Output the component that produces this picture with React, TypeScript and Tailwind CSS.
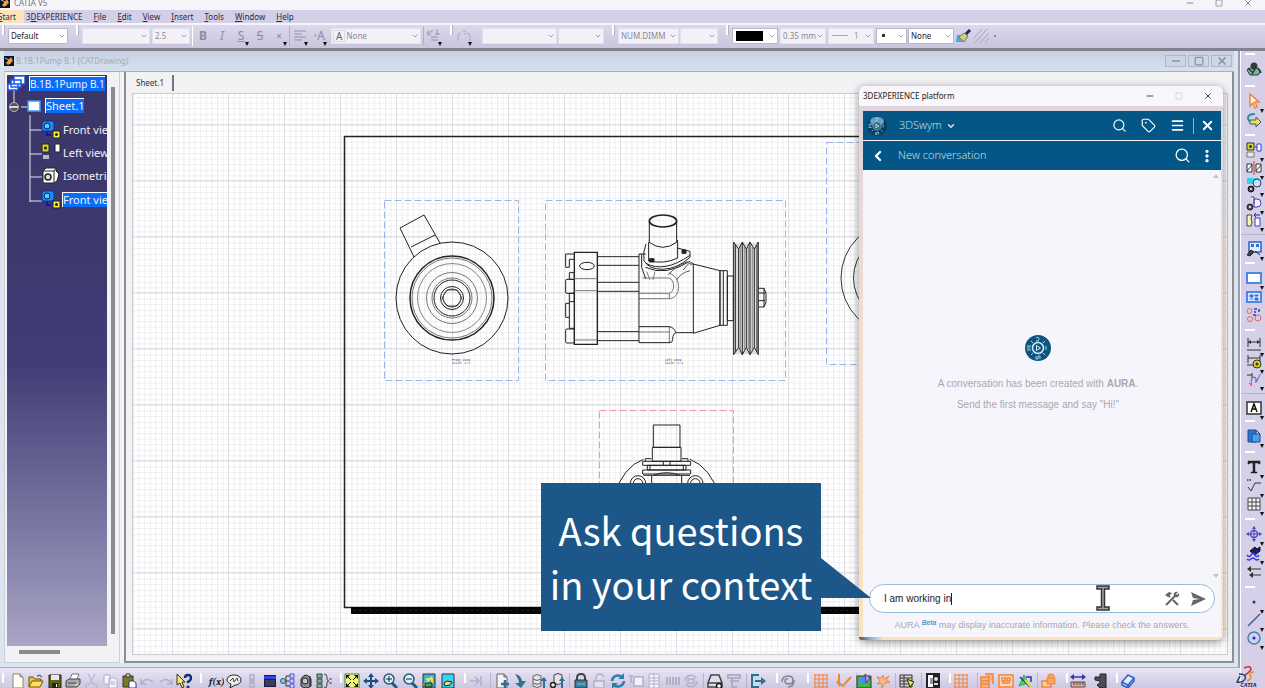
import { ReactNode } from 'react'
import { ChevronDown, ChevronLeft, EllipsisVertical, Menu, Minus, Search, Square, Tag, X } from 'lucide-react'
import clsx from 'clsx'

/* ---------- toolbar icons, all on a 16x16 grid ---------- */

const GHOST = '#b3aec6'
const TEAL = '#2f6f8f'
const ORANGE = '#f0853c'

const icons: Record<string, ReactNode> = {
  new: <path d="M3 1h7l3 3v11H3z M10 1v3h3" fill="#fffef0" stroke="#8a8778" />,
  open: (
    <>
      <path d="M1 14V4h4l2 2h6v2" fill="#e8c33c" stroke="#6b5510" />
      <path d="M1 14l3-6h11l-3 6z" fill="#ffdf5c" stroke="#6b5510" />
      <path d="M9 3q3-2 5 1" fill="none" stroke="#333" />
    </>
  ),
  save: (
    <>
      <path d="M2 2h12v13H2z" fill="#5d6414" stroke="#222" />
      <path d="M4 2h8v5H4z" fill="#e8e8ee" />
      <path d="M5 10h6v5H5z" fill="#222" />
      <path d="M9 11h1v3H9z" fill="#fff" />
    </>
  ),
  print: (
    <>
      <path d="M5 6l2-5h7l-2 5" fill="#fff" stroke="#777" />
      <path d="M1 8l3-2h11v5l-3 3H1z" fill="#a7a9b6" stroke="#444" />
      <path d="M3 10h8" stroke="#444" />
      <path d="M10 12h3" stroke="#e8d820" strokeWidth="2" />
    </>
  ),
  cut: <path d="M4 1l6 11M11 1L5 12M3 15a2 2 0 1 1 2-3M12 15a2 2 0 1 0-2-3" fill="none" stroke={GHOST} />,
  copy: <path d="M2 2h6v9H2z M7 5h6l2 2v8H7z M9 9h4 M9 11h4" fill="#f4f2fa" stroke={GHOST} />,
  paste: (
    <>
      <path d="M2 3h10v11H2z" fill="#7a7a1c" stroke="#333" />
      <path d="M5 1h4v3H5z" fill="#ddd" stroke="#333" />
      <path d="M8 8h5l2 2v5H8z" fill="#fff" stroke="#33a" />
    </>
  ),
  undo: <path d="M2 6v5h5M2 11Q7 3 14 9" fill="none" stroke={GHOST} strokeWidth="1.5" />,
  redo: <path d="M14 6v5H9M14 11Q9 3 2 9" fill="none" stroke={GHOST} strokeWidth="1.5" />,
  help: (
    <>
      <path d="M1 1v11l3-2 2 5 2-1-2-5h3z" fill="#f5e66b" stroke="#333" />
      <path d="M9 5q0-3 3-3t3 3q0 2-3 4v1" fill="none" stroke="#16306e" strokeWidth="2.5" />
      <circle cx="12" cy="14" r="1.5" fill="#16306e" />
    </>
  ),
  fx: <text x="1" y="12" className="font-serif text-[10px] font-bold italic" fill="#1b1b1b">f(x)</text>,
  comment: (
    <>
      <path d="M8 2c4 0 7 2 7 5s-3 5-6 5l-5 3 1-4C3 10 1 9 1 7c0-3 3-5 7-5z" fill="#eee" stroke="#222" />
      <path d="M4 8l3-3 1 4 3-4 1 3" fill="none" stroke="#444" />
    </>
  ),
  chain: <path d="M6 2h4v5H6z M6 9h4v5H6z M8 5v6" fill="none" stroke={GHOST} strokeWidth="1.5" />,
  table: (
    <>
      <path d="M2 2h12v12H2z" fill="#1e1e3c" />
      <path d="M2 3h12v3H2z" fill="#3045e0" />
      <path d="M3 8h10M3 10h10M3 12h10" stroke="#5b5b78" />
    </>
  ),
  graph: (
    <>
      <path d="M3 8h6M6 3v10M6 3h5M6 13h5" fill="none" stroke="#333" />
      <circle cx="3" cy="8" r="2.5" fill="#7ed0d8" stroke="#356" />
      <path d="M10 1h4v4h-4zM10 6h4v4h-4zM10 11h4v4h-4z" fill="#cfd0ff" stroke="#5050d0" />
    </>
  ),
  camera: (
    <>
      <path d="M3 6q5-8 10 0v7q-5 4-10 0z" fill="#8d8d92" stroke="#222" />
      <circle cx="7" cy="8" r="3" fill="#c9c9cd" stroke="#222" />
      <path d="M12 3v11" stroke="#222" />
    </>
  ),
  bricks: (
    <>
      <path d="M1 1h5v4H1zM1 6h5v4H1zM1 11h5v4H1z" fill="#7db38a" stroke="#345" />
      <path d="M8 1q3 0 3 3v2q0 2 2 2-2 0-2 2v2q0 3-3 3M13 6h3M13 10h3" fill="none" stroke="#444" />
    </>
  ),
  fit: (
    <>
      <path d="M1 1h14v14H1z" fill="#f3f37a" stroke="#3a8a4a" />
      <path d="M3 3l4 4M13 3L9 7M3 13l4-4M13 13L9 9" stroke="#111" />
      <path d="M2 2h4L2 6zM14 2h-4l4 4zM2 14h4l-4-4zM14 14h-4l4-4z" fill="#111" />
    </>
  ),
  pan: (
    <>
      <path d="M8 2v12M2 8h12" stroke="#1d4f86" strokeWidth="2" />
      <path d="M8 0l3 4H5zM8 16l3-4H5zM0 8l4-3v6zM16 8l-4-3v6z" fill="#1d4f86" />
    </>
  ),
  zoomIn: (
    <>
      <path d="M10 10l5 5" stroke="#245a80" strokeWidth="3" />
      <circle cx="7" cy="6" r="5" fill="#d9f2fa" stroke="#245a80" strokeWidth="1.5" />
      <path d="M4 6h6M7 3v6" stroke="#222" />
    </>
  ),
  zoomOut: (
    <>
      <path d="M10 10l5 5" stroke="#245a80" strokeWidth="3" />
      <circle cx="7" cy="6" r="5" fill="#d9f2fa" stroke="#245a80" strokeWidth="1.5" />
      <path d="M4 6h6" stroke="#222" />
    </>
  ),
  normal: (
    <>
      <path d="M2 1h12v14H2z" fill="#3bb7d6" stroke="#333" />
      <path d="M3 12l8-8M5 6h6v5" stroke="#e9e24a" strokeWidth="2" fill="none" />
      <path d="M4 10h7v4H4z" fill="#49a05a" stroke="#222" />
    </>
  ),
  views: (
    <>
      <path d="M2 1h12v14H2z" fill="#39d3f2" stroke="#333" />
      <path d="M4 10l3-2 5 1-2 3-5 1z" fill="#eadf72" stroke="#222" />
    </>
  ),
  ghostArrow: <path d="M2 8h9M7 4l4 4-4 4M13 3v10" fill="none" stroke={GHOST} strokeWidth="1.5" />,
  docPlus: (
    <>
      <path d="M3 1h7l3 3v11H3z M10 1v3h3" fill="#f4f4f6" stroke="#666" />
      <path d="M11 7v8M7 11h8" stroke={TEAL} strokeWidth="2.5" />
    </>
  ),
  download: <path d="M3 1q6 1 7 7h4l-5 7-6-5h4q0-4-4-9z" fill={TEAL} />,
  dbUp: (
    <>
      <path d="M2 3q4-3 8 0v10q-4 3-8 0z M2 6q4 3 8 0 M2 10q4 3 8 0" fill="#e3e3e8" stroke="#666" />
      <path d="M12 15V8h-3l4-4 3 4h-2v7z" fill={TEAL} />
    </>
  ),
  dbUpGear: (
    <>
      <path d="M5 2q4-3 8 0v8q-4 3-8 0z" fill="#e3e3e8" stroke="#444" />
      <circle cx="4" cy="12" r="2.5" fill="#eee" stroke="#222" strokeWidth="1.5" />
      <path d="M12 15V8h-2l3-4 3 4h-2v7z" fill={TEAL} />
    </>
  ),
  lock: (
    <>
      <path d="M4 8V5q0-4 4-4t4 4v3" fill="none" stroke="#444" strokeWidth="2" />
      <path d="M2 7h12v8H2z" fill="#3d7fa0" stroke="#333" />
      <path d="M4 11h8" stroke="#8fc0d4" />
    </>
  ),
  unlock: <path d="M5 8V5q0-4 4-4 3 0 3 3M3 8h10v7H3z" fill="#e4e1ee" stroke={GHOST} strokeWidth="1.5" />,
  refresh: (
    <>
      <path d="M2 8a6 6 0 0 1 10-4M14 8a6 6 0 0 1-10 4" fill="none" stroke="#2b7fa6" strokeWidth="2.5" />
      <path d="M14 0v6H8zM2 16v-6h6z" fill="#2b7fa6" />
    </>
  ),
  ghostPanel: <path d="M1 3h4M3 3v6M6 4h9v9H6z M2 9h3" fill="#f4f2fa" stroke={GHOST} strokeWidth="1.5" />,
  ghostSheet: <path d="M3 1h10v14H3z M3 5h10 M3 8h10 M3 11h10 M8 1v14" fill="#f4f2fa" stroke={GHOST} />,
  ghostBars: <path d="M2 4v8M5 4v8M8 4v8M11 4v8M14 4v8" stroke={GHOST} strokeWidth="2" />,
  ghostSync: <path d="M2 8a6 6 0 0 1 11-3M14 8a6 6 0 0 1-11 3M5 6h6v4H5z" fill="none" stroke={GHOST} strokeWidth="1.5" />,
  drive: (
    <>
      <path d="M4 2h8l3 8v4H1v-4z M1 10h14" fill="#dde0e8" stroke="#444" strokeWidth="1.5" />
      <circle cx="12" cy="13" r="2.5" fill="#fff" stroke="#222" strokeWidth="1.5" />
    </>
  ),
  ghostFilter: <path d="M2 2h12v3H2zM4 8h9M6 5v9h5" fill="none" stroke={GHOST} strokeWidth="2" />,
  exit: (
    <>
      <path d="M9 2H2v12h7" fill="#c7dbe8" stroke={TEAL} strokeWidth="2" />
      <path d="M5 8h7" stroke={TEAL} strokeWidth="2" />
      <path d="M11 4l5 4-5 4z" fill={TEAL} />
    </>
  ),
  swirl: <path d="M2 9q0-6 6-6 5 0 5 4t-4 4-4-3 3-2M14 7q0 7-6 7" fill="none" stroke="#85828f" strokeWidth="1.5" />,
  grid: <path d="M2 1v14M6 1v14M10 1v14M14 1v14M1 2h14M1 6h14M1 10h14M1 14h14" stroke={ORANGE} />,
  snap: <path d="M3 1v9l4 3 8-9M1 8l3 5" fill="none" stroke={ORANGE} strokeWidth="2" />,
  picture: (
    <>
      <path d="M1 3h14v12H1z" fill="#43b649" stroke="#333" />
      <path d="M3 5h7v5H3z" fill="#4a8cff" />
      <path d="M9 1l5 4-4 5z" fill="#c28cff" stroke="#444" />
    </>
  ),
  spark: <path d="M8 2l1 4 5-3-3 4 4 2-5 1-3 5-1-5-4 1 3-3-3-4 4 1z" fill="#f7b888" stroke={ORANGE} />,
  pattern: (
    <>
      <path d="M1 2h12v12H1z" fill="#d5d5d5" stroke="#333" />
      <path d="M1 5h12M1 8h12M1 11h12M5 2v12" stroke="#333" />
      <path d="M8 6l7 3-4 5z" fill="#e6e23a" stroke="#222" />
    </>
  ),
  contrast: (
    <>
      <path d="M2 1h12v14H2z" fill="#fff" stroke="#222" strokeWidth="2" />
      <path d="M8 1h6v14H8z" fill="#222" />
      <path d="M5 5h3v6H5z" fill="#999" />
      <circle cx="11" cy="6" r="2" fill="#ddd" />
      <path d="M9 11h4" stroke="#ddd" strokeWidth="2" />
    </>
  ),
  orangeDoc: <path d="M2 4h8v11H2zM6 1h8v10M2 8h8M2 11h8" fill="#fbb27c" stroke={ORANGE} strokeWidth="1.5" />,
  orangeTiles: <path d="M1 2h14v12H1zM4 5h3v3H4zM9 5h3v3H9zM4 10h8" fill="#fdd9bd" stroke={ORANGE} strokeWidth="1.5" />,
  analyse: (
    <>
      <path d="M2 13L7 2l4 8z" fill="#57d066" stroke="#2a5" />
      <path d="M3 4l10 10M9 4h5v5" stroke="#1e3f9a" strokeWidth="1.5" fill="none" />
      <path d="M8 7l6 7" stroke="#e6dd2e" strokeWidth="2" />
    </>
  ),
  orangeLock: (
    <>
      <path d="M1 8h9v6H1z" fill="#fdd0ac" stroke={ORANGE} strokeWidth="1.5" />
      <path d="M7 5V3q0-2 3-2t3 2v2M6 5h8v6H6z" fill="#f9a262" stroke={ORANGE} />
    </>
  ),
  measure: (
    <>
      <path d="M2 4h12" stroke="#3333b0" strokeWidth="1.5" />
      <path d="M0 4l4-3v6zM16 4l-4-3v6z" fill="#3333b0" />
      <path d="M1 9h14v5H1z" fill="#e3a7a2" stroke="#555" />
      <path d="M4 9v3M7 9v3M10 9v3M13 9v3" stroke="#444" />
    </>
  ),
  clamp: <path d="M8 1h6v14H8l-3-3 3-2V8L3 7V4h5z" fill="#4a4f57" stroke="#222" />,
  book: (
    <>
      <path d="M2 9l6-7 6 3-6 7z" fill="#e6efff" stroke="#2d63c8" strokeWidth="1.5" />
      <path d="M2 9v3l6 3 6-7V5M8 12v3" fill="none" stroke="#2d63c8" strokeWidth="1.5" />
    </>
  ),

  // right hand column
  robot: (
    <>
      <path d="M1 9q7-6 14 1l-3 4H4z" fill="#7fb39b" stroke="#333" />
      <circle cx="8" cy="5" r="3.5" fill="#333a3a" />
      <path d="M2 7l4 4M12 7l3 5M6 13l3-5" stroke="#24433a" strokeWidth="1.5" />
    </>
  ),
  arrow: <path d="M4 1v12l3-3 2 5 2-1-2-5h4z" fill="#fff3e6" stroke={ORANGE} strokeWidth="1.5" />,
  turn: (
    <>
      <path d="M9 2Q2 2 2 6t6 4" fill="none" stroke="#2b8faa" strokeWidth="2" />
      <path d="M4 8h6V5l5 5-5 5v-3H4z" fill="#dfe46a" stroke="#555" />
    </>
  ),
  project: (
    <>
      <path d="M1 1h7v7H1z" fill="#d6d63a" stroke="#333" />
      <circle cx="4.5" cy="4.5" r="1.5" fill="#333" />
      <path d="M1 10h7v5H1z" fill="#e9e9ee" stroke="#777" />
      <path d="M9 5h3" stroke="#22c" />
      <path d="M11 2h4v7h-4z" fill="#fff" stroke="#3a3ac8" />
    </>
  ),
  section: (
    <>
      <path d="M1 4h5v8H1zM10 4h5v8h-5z" fill="#fff" stroke="#333" />
      <path d="M1 11l5-6M10 11l5-6" stroke="#333" />
      <path d="M8 1v14" stroke="#c33" />
    </>
  ),
  detail: (
    <>
      <path d="M1 1h12L8 7H1z" fill="#2cd6ee" />
      <circle cx="11" cy="6" r="4" fill="#cfe0f7" stroke="#336" />
      <circle cx="5" cy="12" r="3" fill="#444" stroke="#111" />
      <circle cx="5" cy="12" r="1" fill="#fff" />
    </>
  ),
  clip: (
    <>
      <path d="M5 2h3v7M8 4h3q4 0 4 4t-4 4H8z" fill="#f5f5ff" stroke="#3d3dae" />
      <circle cx="4" cy="12" r="3" fill="#555" stroke="#222" />
      <circle cx="4" cy="12" r="1" fill="#fff" />
    </>
  ),
  broken: (
    <>
      <path d="M1 3h5l-1 4 1 3-1 4H1z" fill="#f7f7a8" stroke="#444" />
      <path d="M9 6h5v8H9z" fill="#fff" stroke="#3a3ac8" />
      <path d="M8 3h6M10 1L8 3l2 2" fill="none" stroke="#22b" />
    </>
  ),
  wizard: (
    <>
      <path d="M3 1h12v10H3z" fill="#e6efff" stroke="#2d63c8" strokeWidth="1.5" />
      <path d="M5 3h3v3H5zM10 3h3v3h-3z" fill="#3770d8" />
      <path d="M1 14l4-5 3 2-4 4zM9 10l5 4" fill="#444" stroke="#222" />
    </>
  ),
  sheet: <path d="M1 3h14v10H1z" fill="#fff" stroke="#4c86e8" strokeWidth="2" />,
  sheetDetail: (
    <>
      <path d="M1 3h14v10H1z" fill="#d9e7ff" stroke="#4c86e8" strokeWidth="2" />
      <path d="M4 6h3v2H4zM9 6h3v1H9zM9 9h3v2H9zM4 10h3" stroke="#3770d8" fill="#3770d8" />
    </>
  ),
  instance: (
    <>
      <circle cx="3.5" cy="4" r="2.5" fill="none" stroke="#e06a6a" />
      <circle cx="4" cy="12" r="2.5" fill="none" stroke="#e06a6a" />
      <circle cx="12" cy="11" r="3" fill="none" stroke="#e06a6a" />
      <path d="M8 2h3M8 5h2M13 2v3M7 8h3" stroke="#3939c8" strokeWidth="1.5" />
    </>
  ),
  dimension: (
    <>
      <path d="M2 1v9M14 1v9M2 5h12M1 13h14" stroke="#333" />
      <path d="M2 5l3-2v4zM14 5l-3-2v4z" fill="#333" />
    </>
  ),
  dimensionGear: (
    <>
      <path d="M2 1v8M14 1v6M2 4h12M1 11h8" stroke="#333" />
      <circle cx="11" cy="10" r="4" fill="#dcd02a" stroke="#333" />
      <circle cx="11" cy="10" r="1.5" fill="#333" />
    </>
  ),
  curve: (
    <>
      <path d="M1 4h5M6 2v5" stroke="#333" />
      <path d="M5 14q0-8 3-8t2 4 2-2 2-4" fill="none" stroke="#5a4fd0" />
      <path d="M3 12l3 3" stroke="#d44" />
    </>
  ),
  datum: (
    <>
      <path d="M1 2h14v12H1z" fill="#fff" stroke="#333" strokeWidth="1.5" />
      <path d="M5 12l3-8 3 8M6 9h4" fill="none" stroke="#111" strokeWidth="1.5" />
    </>
  ),
  props: (
    <>
      <path d="M2 2h8v12H2z" fill="#2b74d0" stroke="#1b4a90" />
      <path d="M6 6h8v8H6z" fill="#4aa0ea" stroke="#1b4a90" />
      <path d="M10 2l4 4" stroke="#333" />
    </>
  ),
  text: <path d="M2 2h12v3h-1l-1-1H9v9h2v1H5v-1h2V4H4L3 5H2z" fill="#222" stroke="#222" strokeWidth=".5" />,
  rough: (
    <>
      <path d="M2 9l3 4L9 5h6" fill="none" stroke="#333" />
      <path d="M1 2h5" stroke="#333" strokeWidth="1.5" strokeDasharray="1.5 1" />
    </>
  ),
  tableGrid: <path d="M2 2h12v12H2zM2 6h12M2 10h12M6 2v12M10 2v12" fill="#f5f5fa" stroke="#444" />,
  axis: (
    <>
      <circle cx="8" cy="8" r="3.5" fill="none" stroke="#4a4ad0" strokeWidth="1.5" />
      <path d="M8 1v14M1 8h14" stroke="#4a4ab0" />
      <path d="M8 0l2 3H6zM8 16l2-3H6zM0 8l3-2v4zM16 8l-3-2v4z" fill="#4a4ab0" />
    </>
  ),
  fill: (
    <>
      <path d="M4 6l5-4 2 2 3-2v4l-5 4z" fill="#1c1c74" stroke="#111" />
      <path d="M1 10q2 3 4 0t4 0 4 0M1 14q2 2 4 0t4 0 4 0" fill="none" stroke="#3c3ce0" strokeWidth="1.5" />
    </>
  ),
  arrows: (
    <>
      <path d="M4 5h11M4 11h11" stroke="#333" />
      <path d="M1 5l4-3v6zM3 11l4-3v6z" fill="#333" />
    </>
  ),
  point: <circle cx="8" cy="8" r="1.5" fill="#1b2f8e" />,
  line: <path d="M2 14L14 2" stroke="#37608c" strokeWidth="1.5" />,
  circle: (
    <>
      <circle cx="8" cy="8" r="6" fill="none" stroke="#3f82b4" strokeWidth="1.5" />
      <circle cx="8" cy="8" r="1.5" fill="#2222c8" />
    </>
  ),
}

// a trailing "+" marks the icons that open a flyout
function ToolButton({ name }: { name: string }) {
  const flyout = name.endsWith('+')
  const key = name.replace('+', '')
  return (
    <button type="button" aria-label={key} className="relative size-4 shrink-0">
      <svg viewBox="0 0 16 16" className="size-4">{icons[key]}</svg>
      {flyout && (
        <svg viewBox="0 0 4 4" className="absolute -right-0.5 -bottom-1 size-1">
          <path d="M0 0h4L2 4z" fill="#111" />
        </svg>
      )}
    </button>
  )
}

const bottomSections = [
  { box: 'w-[198px] pl-2 pr-2', bar: true, items: ['new', 'open', 'save', 'print', 'cut', 'copy', 'paste', 'undo', 'redo', 'help'] },
  { box: 'w-[140px] pl-2 pr-2', bar: true, items: ['fx', 'comment', 'chain', 'table', 'graph', 'camera', 'bricks'] },
  { box: 'w-[124px] pl-1 pr-2', bar: true, items: ['fit', 'pan', 'zoomIn', 'zoomOut', 'normal', 'views'] },
  { box: 'w-[26px] pl-1', bar: true, items: ['ghostArrow'] },
  { box: 'w-[79px] px-1', items: ['docPlus', 'download', 'dbUp', 'dbUpGear'] },
  { box: 'w-[134px] px-1', items: ['lock', 'unlock', 'refresh', 'ghostPanel', 'ghostSheet', 'ghostBars', 'ghostSync'] },
  { box: 'w-[43px] px-1', items: ['drive', 'ghostFilter'] },
  { box: 'w-[30px] pl-1', items: ['exit'] },
  { box: 'w-[31px] pl-1', bar: true, items: ['swirl'] },
  { box: 'w-[49px] pl-1.5 pr-1', bar: true, items: ['grid', 'snap'] },
  { box: 'w-[39px] pr-1', items: ['picture', 'spark'] },
  { box: 'w-[26px] pl-1', items: ['pattern'] },
  { box: 'w-[28px] pl-1', items: ['contrast'] },
  { box: 'w-[28px] pl-1', bar: true, items: ['grid'] },
  { box: 'w-[60px] pl-0.5 pr-1', items: ['orangeDoc', 'orangeTiles', 'analyse'] },
  { box: 'w-[29px] pl-1', items: ['orangeLock'] },
  { box: 'w-[50px] pl-1 pr-2', bar: true, items: ['measure', 'clamp'] },
  { box: 'w-[40px] pl-1', bar: true, items: ['book'] },
]

const sideSections = [
  { box: 'h-[32px]', bar: true, items: ['robot'] },
  { box: 'h-[49px]', bar: true, items: ['arrow+', 'turn'] },
  { box: 'h-[100px]', bar: true, items: ['project+', 'section+', 'detail+', 'clip+', 'broken+'] },
  { box: 'h-[28px]', items: ['wizard+'] },
  { box: 'h-[67px]', bar: true, items: ['sheet+', 'sheetDetail', 'instance'] },
  { box: 'h-[64px]', bar: true, items: ['dimension+', 'dimensionGear+', 'curve+'] },
  { box: 'h-[27px]', items: ['datum+'] },
  { box: 'h-[31px]', bar: true, items: ['props+'] },
  { box: 'h-[67px]', bar: true, items: ['text+', 'rough+', 'tableGrid+'] },
  { box: 'h-[68px]', bar: true, items: ['axis+', 'fill+', 'arrows'] },
  { box: 'h-[66px]', bar: true, items: ['point+', 'line+', 'circle+'] },
]

function BottomToolbar() {
  return (
    <div className="flex h-[21px] shrink-0 overflow-hidden border-t border-[#a9adbb] bg-linear-to-b from-[#e9e4f4] to-[#cdc8e2] pl-0.5">
      {bottomSections.map((s, i) => (
        <div key={i} className="flex shrink-0 pt-[5px]">
          <span className={clsx('shrink-0', s.bar ? '-mr-0.5 h-2.5 w-0.5 bg-white' : '-mr-px h-4 w-px bg-[#b9b4cc]')} />
          <div className={clsx('flex items-start justify-between', s.box)}>
            {s.items.map((n) => <ToolButton key={n} name={n} />)}
          </div>
        </div>
      ))}
    </div>
  )
}

function SideToolbar() {
  return (
    <aside className="relative w-[25px] shrink-0 border-l border-white bg-[#d5d0e8] pt-0.5">
      {sideSections.map((s, i) => (
        <div key={i} className={clsx('flex flex-col', s.box)}>
          <span className={clsx('shrink-0', s.bar ? 'ml-1 h-0.5 w-2.5 bg-white' : 'h-px w-full bg-[#b9b4cc]')} />
          <div className="flex flex-1 flex-col items-center justify-between py-1.5 pl-0.5">
            {s.items.map((n) => <ToolButton key={n} name={n} />)}
          </div>
        </div>
      ))}
      <svg viewBox="0 0 28 22" className="absolute right-0.5 bottom-0 h-[22px] w-7">
        <path d="M9 2q7-3 7 1-1 3-6 6" fill="none" stroke="#d6292f" strokeWidth="1.5" />
        <path d="M4 8q8 0 6 5-2 4-8 3l3-6" fill="none" stroke="#26407e" strokeWidth="1.5" />
        <path d="M19 6q-5 0-4 3 3 3-3 6" fill="none" stroke="#e39a4c" strokeWidth="2" />
        <text x="5" y="21" className="font-['Noto_Sans'] text-[6px] font-bold italic" fill="#1c2c66">CATIA</text>
      </svg>
    </aside>
  )
}

/* ---------- top bars ---------- */

function CatiaMark() {
  return (
    <svg viewBox="0 0 10 10" className="size-2.5 shrink-0">
      <path d="M0 0h10v10H0z" fill="#10141f" />
      <path d="M2 7L7 1l2 4-5 4z" fill="#f39a3a" />
      <path d="M1 2l4 2 1 4" stroke="#8fd2f2" fill="none" />
    </svg>
  )
}

const menus = ['3|D|EXPERIENCE', '|F|ile', '|E|dit', '|V|iew', '|I|nsert', '|T|ools', '|W|indow', '|H|elp']

function MenuBar() {
  return (
    <nav className="flex h-[15px] shrink-0 items-center border-b-2 border-[#f6f4fb] bg-[#d3cfe7] text-[#2e2c3a]">
      <button type="button" className="mr-0.5 h-full w-6 bg-[#fde2bb] pr-1.5">
        <span className="-ml-1"><u className="underline-offset-1">S</u>tart</span>
      </button>
      <div className="flex gap-[11px]">
        {menus.map((m) => {
          const [a, key, b] = m.split('|')
          return (
            <button type="button" key={m}>
              {a}<u className="underline-offset-1">{key}</u>{b}
            </button>
          )
        })}
      </div>
    </nav>
  )
}

interface ComboProps {
  label: string
  value?: string
  className: string
  enabled?: boolean
  children?: ReactNode
}

function Combo({ label, value = '', className, enabled, children }: ComboProps) {
  return (
    <div className={clsx('relative h-4 shrink-0', className)}>
      <select
        aria-label={label}
        defaultValue={value}
        className={clsx(
          'size-full appearance-none border pr-1 pl-0.5 text-[8px] leading-none',
          enabled ? 'border-[#bbb7c9] bg-white text-[#222]' : 'border-[#e4e1ee] bg-[#f3f0f7] text-[#8b8898]',
        )}
      >
        <option value={value}>{value}</option>
      </select>
      <span className="pointer-events-none absolute inset-y-0 left-0 flex items-center">{children}</span>
      <ChevronDown className="pointer-events-none absolute top-1 right-0.5 size-2 text-[#77748a]" />
    </div>
  )
}

function Grip() {
  return <span className="h-2.5 w-0.5 shrink-0 self-start bg-white shadow-[1px_0_0_#b5b0c8]" />
}

function FormatButton({ label, flyout, children }: { label: string; flyout?: boolean; children: ReactNode }) {
  return (
    <button type="button" aria-label={label} className="relative flex size-4 items-center justify-center text-[12px] leading-none text-[#8e8aa0]">
      {children}
      {flyout && <svg viewBox="0 0 4 4" className="absolute right-0 -bottom-0.5 size-1"><path d="M0 0h4L2 4z" fill="#111" /></svg>}
    </button>
  )
}

function FormatToolbar() {
  return (
    <div className="flex h-[26px] shrink-0 items-center border-b-[3px] border-[#84818f] bg-linear-to-b from-[#dcd8ec] to-[#c9c5dc] pb-0.5 pl-0.5">
      <Grip />
      <Combo label="Style" value="Default" className="ml-1 w-[60px]" enabled />
      <span className="w-2" />
      <Grip />
      <Combo label="Font" className="ml-1 w-[68px]" />
      <Combo label="Size" value="2.5" className="ml-0.5 w-[38px]" />
      <span className="mx-0.5 h-5 w-px bg-white" />
      <div className="flex gap-[3px]">
        <FormatButton label="Bold"><b>B</b></FormatButton>
        <FormatButton label="Italic"><i>I</i></FormatButton>
        <FormatButton label="Underline" flyout><span className="underline">S</span></FormatButton>
        <FormatButton label="Strike"><s>S</s></FormatButton>
        <FormatButton label="Superscript" flyout><span className="text-[10px]">×</span></FormatButton>
      </div>
      <span className="mx-0.5 h-5 w-px bg-[#b5b0c8]" />
      <div className="flex gap-[3px]">
        <FormatButton label="Align" flyout>
          <svg viewBox="0 0 16 16" className="size-4"><path d="M2 3h12M2 6h8M2 9h12M2 12h8" stroke="#9490a6" /></svg>
        </FormatButton>
        <FormatButton label="Anchor" flyout><span className="text-[7px]">+</span>A</FormatButton>
      </div>
      <Combo label="Frame" value="&nbsp;&nbsp;&nbsp;&nbsp;&nbsp;&nbsp;None" className="ml-1 w-[90px]">
        <span className="ml-0.5 border border-[#ddd9e6] px-0.5 text-[10px] leading-none text-[#666]">A</span>
      </Combo>
      <span className="mx-0.5 h-5 w-px bg-[#b5b0c8]" />
      <FormatButton label="Symbol" flyout>
        <svg viewBox="0 0 16 16" className="size-4"><path d="M2 6l5-4M3 3a2 2 0 1 0 2 3M11 1v5M9 6h5M5 9h7M5 12h7" fill="none" stroke="#9490a6" /></svg>
      </FormatButton>
      <span className="w-2" />
      <Grip />
      <span className="w-1" />
      <FormatButton label="Tolerance" flyout>
        <svg viewBox="0 0 16 16" className="size-4"><path d="M2 13V8q0-3 3-3M14 13V8q0-3-3-3M7 3h3M8 6h2" fill="none" stroke="#aaa6bb" /></svg>
      </FormatButton>
      <Combo label="Tolerance format" className="ml-2.5 w-[75px]" />
      <Combo label="Tolerance value" className="ml-px w-[46px]" />
      <span className="w-2" />
      <Grip />
      <Combo label="Numerical display" value="NUM.DIMM" className="ml-1 w-[61px]" />
      <Combo label="Precision" className="ml-px w-[38px]" />
      <span className="w-2" />
      <Grip />
      <Combo label="Colour" className="ml-1 w-[46px]" enabled>
        <span className="ml-1 h-2.5 w-[27px] bg-black" />
      </Combo>
      <Combo label="Thickness" value="0.35 mm" className="ml-0.5 w-[46px]" />
      <Combo label="Line type" className="ml-0.5 w-[46px]">
        <span className="ml-1 h-px w-4 bg-[#aaa]" />
        <span className="ml-1.5 text-[#999]">1</span>
      </Combo>
      <Combo label="Point type" className="ml-0.5 w-[31px]" enabled>
        <span className="ml-1.5 size-[3px] bg-[#333]" />
      </Combo>
      <Combo label="Layer" value="None" className="ml-px w-[46px]" enabled />
      <svg viewBox="0 0 16 14" className="ml-0.5 h-3.5 w-4 shrink-0">
        <path d="M1 6h9l-2 7H0z" fill="#4ba4e8" />
        <path d="M3 8l5-4 4 3-4 6z" fill="#d6cf6a" stroke="#777" />
        <path d="M10 5l4-4" stroke="#23235e" strokeWidth="3" />
      </svg>
      <svg viewBox="0 0 16 14" className="ml-0.5 h-3.5 w-4 shrink-0">
        <path d="M0 9l8-9M1 14L13 0M6 14l9-10M11 14l4-5" stroke="#aaa6b6" />
      </svg>
      <span className="ml-1 size-0.5 bg-[#8e8aa0]" />
    </div>
  )
}

/* ---------- specification tree ---------- */

const treeViews = [
  { label: 'Front view', icon: 'front' },
  { label: 'Left view', icon: 'left' },
  { label: 'Isometric', icon: 'iso' },
  { label: 'Front view', icon: 'front', selected: true },
]

function TreeIcon({ kind }: { kind: string }) {
  return (
    <svg viewBox="0 0 20 20" className="size-5 shrink-0">
      {kind === 'front' && (
        <>
          <path d="M1 4l2-2h10v8l-2 2H1z" fill="#1b8df2" stroke="#0b2f8e" />
          <circle cx="6" cy="7" r="3" fill="#5cc8ff" stroke="#06204f" />
          <path d="M6 13v3h4" fill="none" stroke="#1414b4" strokeWidth="2" />
          <path d="M12 12h7v7h-7z" fill="#f4ee3c" stroke="#222" />
          <circle cx="15.5" cy="15.5" r="1.5" fill="#222" />
        </>
      )}
      {kind === 'left' && (
        <>
          <path d="M1 2h7v8H1z" fill="#d8d224" stroke="#222" />
          <circle cx="4.5" cy="6" r="1.5" fill="#222" />
          <path d="M2 13h6v4H2z" fill="#b9b9c4" />
          <path d="M10 5h3" stroke="#22d" strokeWidth="2" />
          <path d="M14 2h5v8h-5z" fill="#fff" stroke="#222" />
        </>
      )}
      {kind === 'iso' && (
        <>
          <path d="M2 5l3-3h10v3l3 3-2 7-3 2H2z" fill="#fff" stroke="#222" />
          <path d="M2 5h11v12M13 5l2-3" fill="none" stroke="#222" />
          <circle cx="7" cy="11" r="3" fill="#ddd" stroke="#222" strokeWidth="1.5" />
        </>
      )}
    </svg>
  )
}

function SpecTree() {
  const selected = 'border-t border-l border-white bg-[#0a6cfa]'
  return (
    <section className="flex w-[116px] shrink-0 flex-col border border-t-0 border-[#cfcdd6] pt-[3px] pl-0.5">
      <div className="flex flex-1">
        <div className="relative w-[100px] overflow-hidden bg-linear-to-b from-[#3a3669] via-[#403c74] to-[#a9a5c6] text-[11px] leading-[14px] whitespace-nowrap text-[#f1f1fa]">
          <svg className="absolute inset-0 size-full">
            <path d="M7 14v18M14 32h6M23 40v87M23 55h12M23 79h12M23 102h12M23 126h12" fill="none" stroke="#e6e6f2" />
            <circle cx="7" cy="32" r="4.5" fill="#555" stroke="#bbb" />
            <path d="M3 32h8" stroke="#fff" strokeWidth="1.5" />
          </svg>
          <div className="relative flex h-4 items-center">
            <svg viewBox="0 0 18 16" className="mr-1 h-4 w-[18px] shrink-0">
              <path d="M7 1h11v8H7z M4 5h10v7H4z M1 9h10v6H1z" fill="#fff" stroke="#1f5bf0" strokeWidth="1.5" />
            </svg>
            <span className={clsx('text-[10px]', selected)}>B.1B.1Pump B.1</span>
          </div>
          <ul className="relative mt-[3px] grid h-[117px] grid-rows-5">
            <li className="flex items-center pl-5">
              <svg viewBox="0 0 14 12" className="h-3 w-3.5"><path d="M1 1h12v10H1z" fill="#fff" stroke="#3b9bff" strokeWidth="1.5" /></svg>
              <span className={clsx('ml-1', selected)}>Sheet.1</span>
            </li>
            {treeViews.map((v, i) => (
              <li key={i} className="flex items-center pl-[34px]">
                <TreeIcon kind={v.icon} />
                <span className={clsx('ml-px', v.selected ? selected : 'border-t border-l border-transparent')}>{v.label}</span>
              </li>
            ))}
          </ul>
        </div>
        <div className="mt-3 mb-3 ml-1 w-1 bg-[#8b8a8f]" />
      </div>
      <div className="mt-1 mb-2 ml-3 h-1 w-[41px] bg-[#8b8a8f]" />
    </section>
  )
}

/* ---------- drawing sheet ---------- */

function FrontView() {
  return (
    <g fill="none" stroke="#222">
      <path d="M414 257L400 228l24-13 16 28M411 247l24-12" />
      <circle cx="452" cy="298" r="56" />
      <circle cx="452" cy="298" r="42" strokeWidth="1.5" />
      <circle cx="452" cy="298" r="40" stroke="#777" />
      <circle cx="452" cy="298" r="34.5" stroke="#888" />
      <circle cx="452" cy="298" r="25.5" stroke="#777" />
      <circle cx="452" cy="298" r="20" stroke="#777" />
      <circle cx="452" cy="298" r="18" />
      <circle cx="452" cy="298" r="11.5" />
      <circle cx="452" cy="298" r="9" />
      <path d="M447 290h10l5 8-5 8h-10l-5-8z" stroke="#555" />
    </g>
  )
}

// drawn at three times the sheet scale
function LeftView() {
  return (
    <g transform="translate(540 180) scale(.3333)" fill="none" stroke="#222" strokeWidth="3">
      <path d="M103 222H77v40h11v-24h15M88 278h15v20H88zM88 340h15v25H88zM88 370H77v42h11M88 365v80h15" />
      <rect x="77" y="298" width="26" height="42" rx="4" />
      <rect x="77" y="447" width="26" height="42" rx="4" />
      <path d="M103 217h69v276h-69z" strokeWidth="4" />
      <ellipse cx="141" cy="258" rx="22" ry="11" />
      <path d="M103 296h69M103 332h69M103 480h69M297 356h95q24-6 24-36t-30-42M297 340h90q14-4 14-22t-14-24h-80M297 456h92M388 340v16M388 440v48M320 275l10 25M345 275l-6 25" stroke="#777" />
      <path d="M172 230h125M172 256h125M172 307h125M172 334h125M172 455h125M172 482h125" />
      <path d="M297 222v266h93q8 0 8-10 0-20 14-20h48M297 440h90q16 2 20 18M297 222h20M305 222v40l12 34" />
      <path d="M318 192q-10 26-6 50 14 26 56 26 46-2 82-36v-18l-38-10M318 250q54 30 132-24M316 262q60 28 134-18" />
      <path d="M328 123v64q40 30 82 0v-64M326 186v56M413 180v54q-40 20-88 8" />
      <ellipse cx="369" cy="123" rx="41" ry="18" strokeWidth="5" />
      <path d="M328 236h14v10h-14zM426 210h12v10h-12z" fill="#222" />
      <path d="M385 285q20-26 58-40M410 300q10-20 40-28M430 270q20-30 30-20" stroke="#555" />
      <path d="M460 252v208M450 252h10l80 20v164l-80 24M540 272h22v164h-22zM550 272v164M562 288h18v134h-18z" />
      <path d="M582 190h74v332h-74z" fill="#ddd" stroke="none" />
      <path d="M581 186l15 22 11-22 12 22 11-22 13 22 12-22v338l-12-22-13 22-11-22-12 22-11-22-15 22z" />
      <path d="M586 195v320M596 208v294M607 186v338M619 208v294M630 186v338M643 208v294M651 195v320" />
      <path d="M601 200v308M613 200v308M625 200v308M637 200v308" stroke="#888" />
      <path d="M657 325h15l6 14v28l-6 14h-15M657 339h18M657 362h18M672 325v56" />
    </g>
  )
}

function TopView() {
  return (
    <g transform="translate(540 400) scale(.3333)" fill="none" stroke="#222" strokeWidth="3">
      <path d="M340 75h80v67h-80zM337 142h86v42h-86zM308 184h144v12H308zM322 196h116v14H322zM308 210h144v12H308zM330 196v14M430 196v14" />
      <path d="M316 184v-8h18M444 184v-8h-18M370 184v12M390 184v12M310 226h140M335 226v40M425 226v40M340 226q40-16 80 0" />
      <path d="M220 290q30-90 90-112M540 290q-30-90-90-112" />
      <circle cx="294" cy="250" r="23" />
      <circle cx="294" cy="250" r="14" />
      <circle cx="466" cy="250" r="23" />
      <circle cx="466" cy="250" r="14" />
    </g>
  )
}

function DrawingSheet() {
  return (
    <svg className="size-full bg-white" role="img" aria-label="Pump drawing">
      <defs>
        <pattern id="minor" x="0" y="3" width="5.6" height="5.6" patternUnits="userSpaceOnUse">
          <path d="M.5 0v5.6M0 .5h5.6" stroke="#e6e6ec" strokeDasharray="2 1" />
        </pattern>
        <pattern id="major" x="39" y="30" width="56" height="56" patternUnits="userSpaceOnUse">
          <path d="M.5 0v56M0 .5h56" stroke="#dedee4" />
        </pattern>
      </defs>
      <rect width="100%" height="100%" fill="url(#minor)" />
      <rect width="100%" height="100%" fill="url(#major)" />
      <g transform="translate(-133 -94)">
        <path d="M344.500 607.500V136.500H1180V607.500z" fill="none" stroke="#222" strokeWidth="1.5" />
        <path d="M351 607h830v7H351z" fill="#050505" />
        <path d="M354 610.500h826" stroke="#333" strokeDasharray="1 4.6" />
        <g fill="none" stroke="#9db4e6" strokeDasharray="7 3">
          <path d="M384.500 200.500h134v180h-134zM545.500 200.500h240v180h-240zM826.500 142.500h134v222h-134z" />
          <path d="M599.500 410.500h134v180h-134z" stroke="#ec9aa4" />
        </g>
        <FrontView />
        <LeftView />
        <TopView />
        <circle cx="897.5" cy="278" r="56.5" fill="none" stroke="#333" />
        <circle cx="897.5" cy="278" r="44" fill="none" stroke="#333" />
        <g className="font-mono text-[3px]" fill="#333">
          <text x="452" y="361">Front view</text>
          <text x="452" y="364">Scale: 1:1</text>
          <text x="665" y="361">Left view</text>
          <text x="665" y="364">Scale: 1:1</text>
        </g>
      </g>
    </svg>
  )
}

/* ---------- 3DEXPERIENCE chat window ---------- */

function Compass({ className, shiny }: { className: string; shiny?: boolean }) {
  return (
    <svg viewBox="0 0 26 26" className={className}>
      <circle cx="13" cy="13" r="13" fill={shiny ? '#0c3c5c' : '#0d5480'} />
      {shiny && <ellipse cx="13" cy="7" rx="9" ry="6" fill="#5f9dbf" />}
      <circle cx="13" cy="13" r="5.5" fill={shiny ? '#2a6b90' : 'none'} stroke="#d9ecf6" strokeWidth={shiny ? 0.5 : 1.5} />
      <path d="M11.500 10.500v5l4-2.500z" fill="none" stroke="#d9ecf6" />
      <path d="M11 3q3-2 3 1t-3 2M2 11h4M2 13h3M2 15h4M11 21v3h2v-3h2v3M21 11v4M6 6l2 2M20 6l-2 2M6 20l2-2M20 20l-2-2" fill="none" stroke="#a8d1e6" />
    </svg>
  )
}

function ChatWindow() {
  return (
    <section className="absolute top-[86px] right-[42px] bottom-12 flex w-[364px] flex-col rounded-md bg-linear-to-b from-[#dcd4e2] via-[#f6dccb] to-[#fbe3bd] shadow-[0_2px_8px_rgba(0,0,0,0.45)]">
      <header className="flex h-5 shrink-0 items-center rounded-t-md bg-[#f8f6fa] px-1 text-[8px] text-[#222]">
        <span className="flex-1">3DEXPERIENCE platform</span>
        <div className="flex gap-5 pr-1.5">
          <button type="button" aria-label="Minimise"><Minus className="size-2.5" /></button>
          <button type="button" aria-label="Maximise"><Square className="size-2 text-[#cfccd4]" /></button>
          <button type="button" aria-label="Close"><X className="size-2.5" /></button>
        </div>
      </header>
      <div className="mt-[5px] mr-0.5 mb-[3px] ml-1 flex flex-1 flex-col bg-[#f6f5fb]">
        <div className="flex h-[29px] items-center bg-[#045686] px-1 text-[#d3e6f1]">
          <Compass className="size-5" shiny />
          <button type="button" className="ml-3 flex flex-1 items-center gap-1 font-['Open_Sans'] text-[11px] font-light">
            3DSwym <ChevronDown className="size-2.5" strokeWidth={3.5} />
          </button>
          <div className="flex items-center gap-3.5 text-white">
            <button type="button" aria-label="Search"><Search className="size-[15px]" strokeWidth={1.8} /></button>
            <button type="button" aria-label="Tags"><Tag className="size-[15px]" strokeWidth={1.8} /></button>
            <button type="button" aria-label="Menu"><Menu className="size-[15px]" strokeWidth={2.5} /></button>
          </div>
          <span className="mr-1.5 ml-2 h-4 w-px bg-[#8db6cd]" />
          <button type="button" aria-label="Close panel" className="pr-0.5 text-white"><X className="size-[15px]" strokeWidth={3} /></button>
        </div>
        <div className="mt-px flex h-[29px] items-center bg-[#045686] pr-1.5 pl-[7px] text-white">
          <button type="button" aria-label="Back"><ChevronLeft className="size-4" strokeWidth={3.5} /></button>
          <h2 className="ml-3 flex-1 font-['Open_Sans'] text-[11px] font-light text-[#d3e6f1]">New conversation</h2>
          <button type="button" aria-label="Search messages"><Search className="size-[17px]" strokeWidth={1.8} /></button>
          <button type="button" aria-label="More" className="ml-2"><EllipsisVertical className="size-4" strokeWidth={3} /></button>
        </div>
        <div className="flex flex-1">
          <div className="flex flex-1 flex-col items-center pt-[165px] pl-0.5 font-['Liberation_Sans'] text-[10px] leading-[21px] text-[#a9a8b0]">
            <Compass className="size-[26px]" />
            <p className="mt-3">A conversation has been created with <b>AURA</b>.</p>
            <p>Send the first message and say "Hi!"</p>
          </div>
          <div className="flex w-2.5 flex-col items-center justify-between py-1">
            <svg viewBox="0 0 6 4" className="h-1 w-1.5"><path d="M0 4h6L3 0z" fill="#c3c1c9" /></svg>
            <svg viewBox="0 0 6 4" className="h-1 w-1.5"><path d="M0 0h6L3 4z" fill="#c3c1c9" /></svg>
          </div>
        </div>
        <form className="relative mx-1.5 mt-0.5 flex h-[29px] items-center rounded-full border border-[#92bdd8] bg-white pr-2 pl-3.5 font-['Liberation_Sans']">
          <input aria-label="Message" defaultValue="I am working in" className="field-sizing-content text-[10px] text-[#222] outline-none" />
          <span className="h-3 w-px bg-[#222]" />
          <span className="flex-1" />
          <button type="button" aria-label="Tools">
            <svg viewBox="0 0 16 16" className="size-4">
              <path d="M2 14L11 5M9 9l5 5M6 6L3 3" stroke="#666" strokeWidth="2" />
              <path d="M1 4l4-3 3 1-4 4zM10 5a3 3 0 0 1 4-4l-2 2 1 1 2-2a3 3 0 0 1-4 4z" fill="#666" />
            </svg>
          </button>
          <button type="button" aria-label="Send" className="ml-2.5">
            <svg viewBox="0 0 16 16" className="size-4"><path d="M1 1l15 7-15 7 2-6 7-1-7-1z" fill="#666" /></svg>
          </button>
          <svg viewBox="0 0 14 26" className="absolute top-0 right-[104px] h-[26px] w-3.5">
            <path d="M1 1h12v3H8.500v18H13v3H1v-3h4.500V4H1z" fill="#a4a4a8" stroke="#333" strokeWidth="1.5" />
          </svg>
        </form>
        <p className="mt-1 mb-1 text-center font-['Liberation_Sans'] text-[9px] leading-4 text-[#a9a8b0]">
          AURA <sup className="font-bold text-[#4b9fd0] italic">Beta</sup> may display inaccurate information. Please check the answers.
        </p>
      </div>
      <span className="absolute bottom-0 left-0 h-[3px] w-6 rounded-bl-md bg-linear-to-r from-[#555] via-[#7fb8d8] to-[#fbe3bd]" />
    </section>
  )
}

function Callout() {
  return (
    <div className="absolute top-[483px] left-[541px] w-[280px] bg-[#1d5789] py-5 text-center font-['Noto_Sans_CJK_SC',sans-serif] text-[38px] leading-[54px] whitespace-nowrap text-white">
      Ask questions<br />in your context
      <svg viewBox="0 0 50 40" className="absolute top-[75px] left-full h-10 w-[50px]">
        <path d="M0 0l50 40H0z" fill="#1d5789" />
      </svg>
    </div>
  )
}

const mdiButtons: [string, ReactNode][] = [
  ['Minimise document', <Minus key="m" className="size-3" strokeWidth={3} />],
  ['Restore document', <Square key="s" className="size-2.5" strokeWidth={3} />],
  ['Close document', <X key="x" className="size-3" strokeWidth={3.5} />],
]

export default function App() {
  return (
    <div className="relative flex h-screen w-full flex-col overflow-hidden bg-[#d5d0e8] font-['Noto_Sans',sans-serif] text-[8px]">
      <header className="flex h-2.5 shrink-0 flex-col justify-end overflow-hidden bg-[#f6f4f8] text-[#77757f]">
        <div className="flex h-[14px] shrink-0 items-center gap-1 pr-3">
          <CatiaMark />
          <span className="flex-1 leading-none">CATIA V5</span>
          <div className="flex items-center gap-5">
            <Minus className="size-2.5" />
            <Square className="size-2" />
            <X className="size-2.5" />
          </div>
        </div>
      </header>
      <MenuBar />
      <FormatToolbar />

      <div className="flex min-h-0 flex-1">
        <div className="flex min-w-0 flex-1 flex-col">
          <main className="flex min-h-0 flex-1 flex-col border-r-2 border-[#9a9eae] bg-[#dbe5f2] pr-1 pb-1 pl-1">
            <div className="flex h-5 shrink-0 items-center bg-linear-to-b from-[#c8d1e4] to-[#d5e1ef] text-[#a3abba]">
              <CatiaMark />
              <span className="ml-0.5 flex-1">B.1B.1Pump B.1 (CATDrawing)</span>
              <div className="flex gap-0.5 pr-0.5">
                {mdiButtons.map(([label, icon]) => (
                  <button key={label} type="button" aria-label={label} className="flex h-3 w-[21px] items-center justify-center border border-[#aeb6c8] bg-[#ccd6e6] text-[#8d93a3]">
                    {icon}
                  </button>
                ))}
              </div>
            </div>
            <div className="flex min-h-0 flex-1 border-t border-[#aab0ba] bg-[#f2f1f4]">
              <SpecTree />
              <div className="ml-1 flex min-w-0 flex-1 flex-col border-r-2 border-b-2 border-l-2 border-[#8d8d94] pr-1 pb-1.5 pl-1.5">
                <div className="flex h-[21px] shrink-0 items-center gap-2 pl-1 text-[#333]">
                  <span>Sheet.1</span>
                  <span className="h-4 w-0.5 bg-[#77767c]" />
                </div>
                <div className="min-h-0 flex-1 overflow-hidden border border-[#cbcad0]">
                  <DrawingSheet />
                </div>
              </div>
            </div>
          </main>
          <BottomToolbar />
        </div>
        <SideToolbar />
      </div>

      <ChatWindow />
      <Callout />
    </div>
  )
}
